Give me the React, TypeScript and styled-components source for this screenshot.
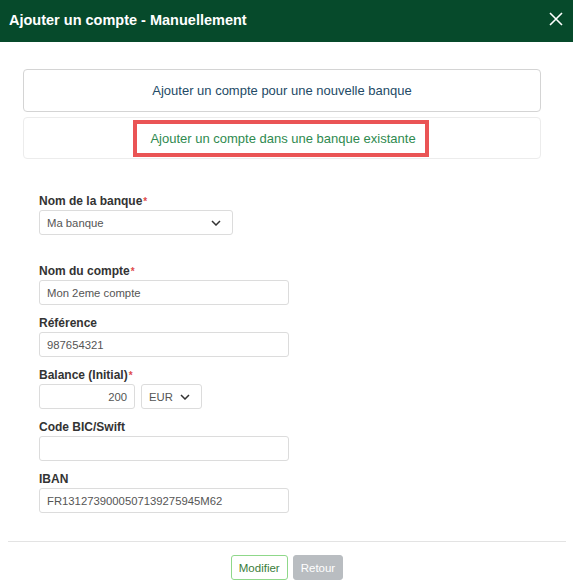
import React from 'react';
import styled, { createGlobalStyle } from 'styled-components';

const GlobalStyle = createGlobalStyle`
  html, body {
    margin: 0;
    padding: 0;
    background: #fff;
    font-family: 'Liberation Sans', Arial, sans-serif;
  }
`;

const Chevron = () => (
  <svg width="10" height="6" viewBox="0 0 10 6" fill="none">
    <path d="M1 1 L5 5 L9 1" stroke="#333" strokeWidth="1.5" />
  </svg>
);

const App = () => {
  return (
    <>
      <GlobalStyle />
      <Modal.Header>
        <Modal.Title>Ajouter un compte - Manuellement</Modal.Title>
        <Modal.Close aria-label="Fermer">
          <svg width="14" height="14" viewBox="0 0 14 14">
            <path d="M1 1 L13 13 M13 1 L1 13" stroke="#fff" strokeWidth="1.6" />
          </svg>
        </Modal.Close>
      </Modal.Header>

      <Modal.Body>
        <Modal.Choices>
          <Modal.Choice>
            <Modal.ChoiceText>Ajouter un compte pour une nouvelle banque</Modal.ChoiceText>
          </Modal.Choice>
          <Modal.Choice $active>
            <Modal.Highlight>
              <Modal.ChoiceText $active>Ajouter un compte dans une banque existante</Modal.ChoiceText>
            </Modal.Highlight>
          </Modal.Choice>
        </Modal.Choices>

        <Form.Wrapper>
          <Form.Field $spaced>
            <Form.Label>
              Nom de la banque<Form.Req>*</Form.Req>
            </Form.Label>
            <Form.Select $width={194}>
              <span>Ma banque</span>
              <Chevron />
            </Form.Select>
          </Form.Field>

          <Form.Field>
            <Form.Label>
              Nom du compte<Form.Req>*</Form.Req>
            </Form.Label>
            <Form.Input $width={250}>Mon 2eme compte</Form.Input>
          </Form.Field>

          <Form.Field>
            <Form.Label>Référence</Form.Label>
            <Form.Input $width={250}>987654321</Form.Input>
          </Form.Field>

          <Form.Field>
            <Form.Label>
              Balance (Initial)<Form.Req>*</Form.Req>
            </Form.Label>
            <Form.Row>
              <Form.Input $width={96} $right>200</Form.Input>
              <Form.Select $width={61}>
                <span>EUR</span>
                <Chevron />
              </Form.Select>
            </Form.Row>
          </Form.Field>

          <Form.Field>
            <Form.Label>Code BIC/Swift</Form.Label>
            <Form.Input $width={250} />
          </Form.Field>

          <Form.Field>
            <Form.Label>IBAN</Form.Label>
            <Form.Input $width={250}>FR1312739000507139275945M62</Form.Input>
          </Form.Field>
        </Form.Wrapper>
      </Modal.Body>

      <Modal.Footer>
        <Modal.Button $variant="outline">Modifier</Modal.Button>
        <Modal.Button $variant="muted">Retour</Modal.Button>
      </Modal.Footer>
    </>
  );
};

export default App;

class Modal {
  static Header = styled.header`
    height: 42px;
    background: #064a2b;
    display: flex;
    align-items: center;
    justify-content: space-between;
    padding: 0 10px 0 9px;
    box-sizing: border-box;
  `;
  static Title = styled.h1`
    margin: -3px 0 0;
    color: #fff;
    font-size: 14.5px;
    font-weight: bold;
  `;
  static Close = styled.button`
    border: 0;
    background: transparent;
    padding: 0;
    display: flex;
    margin-top: -4px;
    cursor: pointer;
  `;
  static Body = styled.main`
    padding: 27px 32px 0 23px;
  `;
  static Choices = styled.div`
    display: flex;
    flex-direction: column;
    gap: 5px;
  `;
  static Choice = styled.div<{ $active?: boolean }>`
    height: ${(p) => (p.$active ? 42 : 43)}px;
    box-sizing: border-box;
    border: 1px solid ${(p) => (p.$active ? '#ececec' : '#d4d4d4')};
    border-radius: 4px;
    display: flex;
    align-items: center;
    justify-content: center;
  `;
  static Highlight = styled.div`
    border: 4px solid #ea5455;
    height: 37px;
    box-sizing: border-box;
    padding: 0 9px 0 13px;
    display: flex;
    align-items: center;
    margin-left: -2px;
  `;
  static ChoiceText = styled.span<{ $active?: boolean }>`
    font-size: 13px;
    color: ${(p) => (p.$active ? '#2f8a4f' : '#234a66')};
  `;
  static Footer = styled.footer`
    margin: 28px 7px 0 8px;
    border-top: 1px solid #e3e3e3;
    padding-top: 13px;
    display: flex;
    justify-content: center;
    gap: 5px;
  `;
  static Button = styled.button<{ $variant: 'outline' | 'muted' }>`
    height: 25px;
    padding: 0 7px;
    border-radius: 3px;
    font-family: 'Liberation Sans', Arial, sans-serif;
    font-size: 11.5px;
    border: 1px solid ${(p) => (p.$variant === 'outline' ? '#8fd88a' : '#b9bdc1')};
    background: ${(p) => (p.$variant === 'outline' ? '#fff' : '#b9bdc1')};
    color: ${(p) => (p.$variant === 'outline' ? '#3a7d3a' : '#fff')};
    cursor: pointer;
  `;
}

class Form {
  static Wrapper = styled.div`
    padding: 35px 0 0 16px;
    display: flex;
    flex-direction: column;
  `;
  static Field = styled.div<{ $spaced?: boolean }>`
    display: flex;
    flex-direction: column;
    margin-bottom: ${(p) => (p.$spaced ? 29 : 11)}px;
    &:last-child {
      margin-bottom: 0;
    }
  `;
  static Label = styled.label`
    font-size: 12px;
    line-height: 15px;
    font-weight: bold;
    color: #333;
    margin-bottom: 1px;
  `;
  static Req = styled.span`
    color: #e04b4b;
    font-size: 10px;
    vertical-align: top;
    margin-left: 1px;
  `;
  static Row = styled.div`
    display: flex;
    gap: 6px;
  `;
  static Input = styled.div<{ $width: number; $right?: boolean }>`
    width: ${(p) => p.$width}px;
    height: 25px;
    box-sizing: border-box;
    border: 1px solid #dcdcdc;
    border-radius: 3px;
    padding: 0 7px;
    display: flex;
    align-items: center;
    justify-content: ${(p) => (p.$right ? 'flex-end' : 'flex-start')};
    font-size: 11.3px;
    color: #555;
  `;
  static Select = styled.div<{ $width: number }>`
    width: ${(p) => p.$width}px;
    height: 25px;
    box-sizing: border-box;
    border: 1px solid #dcdcdc;
    border-radius: 3px;
    padding: 0 11px 0 7px;
    display: flex;
    align-items: center;
    justify-content: space-between;
    font-size: 11.3px;
    color: #555;
  `;
}
